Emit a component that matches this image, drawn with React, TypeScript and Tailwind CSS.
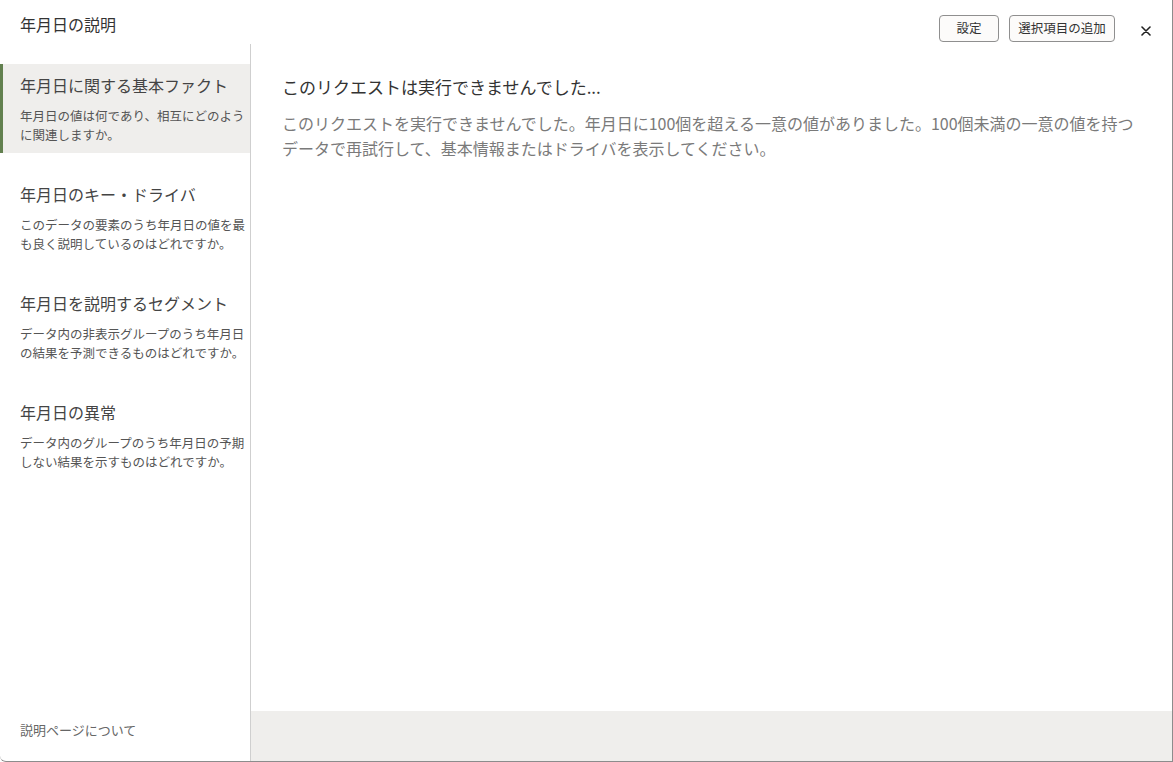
import React from "react";

const items = [
  {
    title: "年月日に関する基本ファクト",
    desc: ["年月日の値は何であり、相互にどのよう", "に関連しますか。"],
    active: true,
  },
  {
    title: "年月日のキー・ドライバ",
    desc: ["このデータの要素のうち年月日の値を最", "も良く説明しているのはどれですか。"],
  },
  {
    title: "年月日を説明するセグメント",
    desc: ["データ内の非表示グループのうち年月日", "の結果を予測できるものはどれですか。"],
  },
  {
    title: "年月日の異常",
    desc: ["データ内のグループのうち年月日の予期", "しない結果を示すものはどれですか。"],
  },
];

export default function App() {
  return (
    <div
      className="w-[1173px] h-[762px] bg-white flex flex-col border-r border-b border-[#8c8c8c] rounded-bl-[6px] overflow-hidden"
      style={{ fontFamily: '"Noto Sans CJK JP", "Noto Sans", sans-serif' }}
    >
      <div className="h-[44px] flex items-start shrink-0">
        <div className="pl-[20px] pt-[12px] text-[16px] leading-[24px] text-[#333]">年月日の説明</div>
        <div className="ml-auto flex items-center pt-[15px] gap-[10px]">
          <button className="h-[27px] w-[60px] rounded-[4px] border border-[#8f8f8f] bg-[#fcfbfa] text-[12.5px] text-[#333] leading-none">
            設定
          </button>
          <button className="h-[27px] w-[106px] rounded-[4px] border border-[#8f8f8f] bg-[#fcfbfa] text-[12.5px] text-[#333] leading-none">
            選択項目の追加
          </button>
          <div className="w-[47px] flex justify-start pl-[16px] pt-[5px]">
            <svg width="10" height="10" viewBox="0 0 10 10">
              <path d="M1 1 L9 9 M9 1 L1 9" stroke="#222" strokeWidth="1.6" strokeLinecap="round" />
            </svg>
          </div>
        </div>
      </div>
      <div className="flex flex-1 min-h-0">
        <div className="w-[251px] shrink-0 border-r border-[#cfcfcf] flex flex-col pt-[20px]">
          {items.map((it, i) => (
            <div
              key={i}
              className={
                it.active
                  ? "bg-[#efeeec] border-l-[3px] border-[#62804f] pl-[17px] pr-[8px] pt-[9px] pb-[9px] mb-[20px]"
                  : "border-l-[3px] border-transparent pl-[17px] pr-[8px] pt-[9px] pb-[9px] mb-[20px]"
              }
            >
              <div className="text-[16px] leading-[24px] text-[#444] whitespace-nowrap">{it.title}</div>
              <div className="mt-[9px] text-[12.5px] leading-[19px] text-[#555] whitespace-nowrap">
                {it.desc[0]}
                <br />
                {it.desc[1]}
              </div>
            </div>
          ))}
          <div className="mt-auto pl-[20px] pb-[21px] text-[13px] leading-[20px] text-[#666]">説明ページについて</div>
        </div>
        <div className="flex-1 flex flex-col">
          <div className="flex-1 pl-[31px] pt-[29px]">
            <div className="text-[17px] leading-[26px] text-[#333] pt-[1px]">このリクエストは実行できませんでした...</div>
            <div className="mt-[11px] text-[16px] leading-[25px] text-[#7a7a7a] whitespace-nowrap">
              このリクエストを実行できませんでした。年月日に100個を超える一意の値がありました。100個未満の一意の値を持つ
              <br />
              データで再試行して、基本情報またはドライバを表示してください。
            </div>
          </div>
          <div className="h-[50px] bg-[#efeeec] shrink-0" />
        </div>
      </div>
    </div>
  );
}
